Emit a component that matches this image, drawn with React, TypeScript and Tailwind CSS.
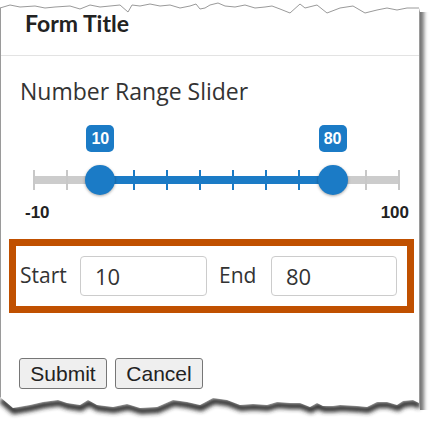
import React from 'react';

const MIN = -10;
const MAX = 100;
const STEP = 10;

const pct = (v: number) => ((v - MIN) / (MAX - MIN)) * 100;

// jagged paper edges (decoration only)
const TOP_EDGE: [number, number][] = [
    [0, 8], [10, 5], [20, 7], [35, 6], [45, 8], [55, 7], [70, 6], [80, 9], [90, 5], [100, 7],
    [110, 6], [120, 5], [128, 12], [132, 5], [140, 6], [150, 4], [160, 6], [170, 5], [180, 8],
    [190, 6], [196, 4], [200, 9], [205, 8], [210, 5], [218, 3], [225, 6], [235, 7], [245, 5],
    [255, 8], [265, 7], [272, 6], [280, 9], [290, 13], [300, 4], [305, 8], [317, 5], [327, 13],
    [340, 8], [353, 6], [365, 13], [377, 10], [387, 8], [397, 10], [407, 8], [419, 8],
];

const BOTTOM_EDGE: [number, number][] = [
    [0, 397], [13, 408], [30, 405], [43, 402], [58, 400], [67, 403], [80, 405], [88, 400],
    [97, 405], [113, 407], [127, 404], [140, 408], [157, 407], [173, 400], [187, 402],
    [200, 405], [213, 398], [227, 400], [240, 405], [253, 404], [267, 405], [277, 402],
    [290, 403], [300, 403], [310, 407], [317, 403], [323, 406], [333, 406], [340, 405],
    [357, 406], [367, 407], [377, 402], [387, 402], [397, 405], [403, 401], [413, 400], [419, 403],
];

const pts = (p: [number, number][]) => p.map(([x, y]) => `${x},${y}`).join(' ');

const PaperEdges: React.FC = () => (
    <svg className="absolute left-0 top-0 pointer-events-none" width={436} height={429}>
        <defs>
            <filter id="blur" x="-10%" y="-100%" width="120%" height="300%">
                <feGaussianBlur stdDeviation="2.2" />
            </filter>
            <clipPath id="below">
                <polygon points={`${pts(BOTTOM_EDGE)} 420,410 436,410 436,429 0,429`} />
            </clipPath>
        </defs>
        {/* top */}
        <polygon points={`0,0 436,0 436,12 420,12 ${pts([...TOP_EDGE].reverse())}`} fill="#fff" />
        <polyline points={pts(TOP_EDGE)} fill="none" stroke="#9a9a9a" strokeWidth={1} />
        {/* bottom */}
        <polygon points={`${pts(BOTTOM_EDGE)} 420,410 436,410 436,429 0,429`} fill="#fff" />
        <g clipPath="url(#below)">
            <polyline
                points={pts(BOTTOM_EDGE)}
                transform="translate(1 3)"
                fill="none"
                stroke="#2a2a2a"
                strokeWidth={6}
                filter="url(#blur)"
            />
        </g>
    </svg>
);

const RangeSlider: React.FC<{ start: number; end: number }> = ({ start, end }) => {
    const ticks: number[] = [];
    for (let v = MIN; v <= MAX; v += STEP) ticks.push(v);

    return (
        <div className="mt-[14px]">
            <div className="relative ml-[33px] w-[365px] h-[83px]">
                {/* Track */}
                <div className="absolute left-[-1px] right-[-1px] top-[56px] h-[8px] bg-[#cccccc]" />
                <div
                    className="absolute top-[56px] h-[8px] bg-[#1b7bc6]"
                    style={{ left: `${pct(start)}%`, width: `${pct(end) - pct(start)}%` }}
                />

                {/* Ticks */}
                {ticks.map(v => (
                    <div
                        key={v}
                        className={`absolute top-[50px] h-[20px] w-[2px] -ml-[1px] ${v >= start && v <= end ? 'bg-[#1b7bc6]' : 'bg-[#c8c8c8]'}`}
                        style={{ left: `${pct(v)}%` }}
                    />
                ))}

                {/* Thumbs + value bubbles */}
                {[start, end].map(v => (
                    <React.Fragment key={v}>
                        <div
                            className="absolute top-[5px] w-[28px] h-[27px] -ml-[14px] rounded-[5px] bg-[#1b7bc6] text-white font-bold text-[16px] flex items-center justify-center font-['Liberation_Sans',Arial,sans-serif]"
                            style={{ left: `${pct(v)}%` }}
                        >
                            {v}
                        </div>
                        <div
                            className="absolute top-[45px] w-[30px] h-[30px] -ml-[15px] rounded-full bg-[#1b7bc6] shadow-[0_1px_3px_rgba(0,0,0,0.35)]"
                            style={{ left: `${pct(v)}%` }}
                        />
                    </React.Fragment>
                ))}
            </div>

            <div className="flex justify-between pl-[24px] pr-[10px] text-[17px] leading-[20px] font-bold text-[#222] font-['Liberation_Sans',Arial,sans-serif]">
                <span>{MIN}</span>
                <span>{MAX}</span>
            </div>
        </div>
    );
};

export default function App() {
    const start = 10;
    const end = 80;

    return (
        <div className="relative w-[436px] h-[429px] bg-white overflow-hidden">
            <div className="w-[420px] h-[412px] bg-white border-x border-[#9a9a9a] shadow-[4px_4px_4px_rgba(0,0,0,0.55)]">
                {/* Header */}
                <div className="h-[56px] border-b border-[#e3e3e3] pt-[10px] pl-[24px]">
                    <h1 className="text-[23px] leading-[26px] font-bold text-[#222] font-['Lato',sans-serif]">
                        Form Title
                    </h1>
                </div>

                {/* Body */}
                <div className="pt-[20px] font-['Open_Sans',sans-serif] text-[#333]">
                    <p className="pl-[19px] text-[23px] leading-[30px]">Number Range Slider</p>

                    <RangeSlider start={start} end={end} />

                    {/* Start / End */}
                    <div className="mt-[16px] ml-[8px] w-[405px] h-[74px] border-[7px] border-[#c05000] flex items-center pl-[4px]">
                        <label className="w-[48px] text-[21px]">Start</label>
                        <input
                            readOnly
                            value={start}
                            className="ml-[12px] w-[127px] h-[40px] border border-[#cccccc] rounded-[4px] px-[14px] text-[22px] text-[#333] outline-none"
                        />
                        <label className="ml-[12px] w-[38px] text-[21px]">End</label>
                        <input
                            readOnly
                            value={end}
                            className="ml-[14px] w-[126px] h-[40px] border border-[#cccccc] rounded-[4px] px-[14px] text-[22px] text-[#333] outline-none"
                        />
                    </div>

                    {/* Buttons */}
                    <div className="mt-[45px] pl-[18px] flex gap-[8px] font-['Liberation_Sans',Arial,sans-serif]">
                        <button className="w-[88px] h-[31px] bg-[#efefef] border border-[#767676] rounded-[3px] text-[21px] leading-[29px] text-[#222]">
                            Submit
                        </button>
                        <button className="w-[88px] h-[31px] bg-[#efefef] border border-[#767676] rounded-[3px] text-[21px] leading-[29px] text-[#222]">
                            Cancel
                        </button>
                    </div>
                </div>
            </div>

            <PaperEdges />
        </div>
    );
}
